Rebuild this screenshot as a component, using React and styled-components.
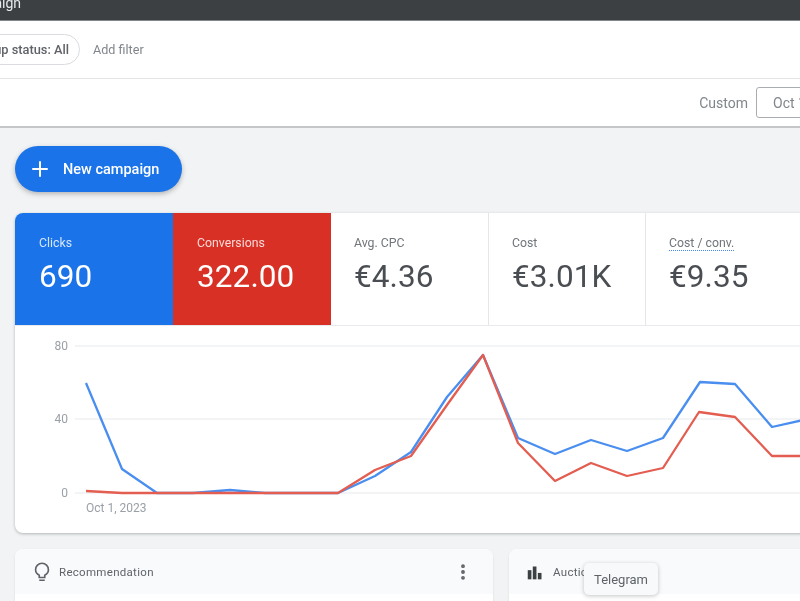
import React from 'react';
import styled, { createGlobalStyle } from 'styled-components';
import { Plus, MoreVertical } from 'lucide-react';

const GlobalStyle = createGlobalStyle`
  html, body {
    margin: 0;
    padding: 0;
    height: 100%;
    overflow: hidden;
    background: #f1f3f4;
  }
`;

const Page = styled.div`
  width: 800px;
  height: 601px;
  overflow: hidden;
  position: relative;
  background: #f1f3f4;
  font-family: Roboto, "Liberation Sans", sans-serif;
  color: #3c4043;
  filter: blur(0.55px);
`;

const TopBar = styled.header`
  height: 20px;
  background: #3c4043;
  border-bottom: 1px solid #80868b;
  overflow: hidden;
`;

const TitleSlot = styled.div`
  width: 21px;
  display: flex;
  justify-content: flex-end;
  white-space: nowrap;
`;

const Title = styled.span`
  font-size: 14px;
  line-height: 14px;
  margin-top: -4px;
  color: #e8eaed;
`;

const FilterBar = styled.div`
  height: 57px;
  display: flex;
  align-items: center;
  gap: 13px;
  background: #fff;
  border-bottom: 1px solid #e4e6e8;
`;

const PillSlot = styled.div`
  width: 80px;
  display: flex;
  justify-content: flex-end;
  white-space: nowrap;
`;

const Pill = styled.div`
  height: 29px;
  display: flex;
  align-items: center;
  padding: 0 10px 0 14px;
  border: 1px solid #dadce0;
  border-radius: 16px;
  font-size: 12.8px;
  font-weight: 500;
  color: #5f6368;
`;

const AddFilter = styled.span`
  font-size: 12.6px;
  color: #80868b;
`;

const DateBar = styled.div`
  height: 47px;
  display: flex;
  align-items: center;
  justify-content: flex-end;
  gap: 8px;
  background: #fff;
  border-bottom: 2px solid #c4c6c8;
  white-space: nowrap;
`;

const DateLabel = styled.span`
  font-size: 14px;
  color: #80868b;
`;

const DateBox = styled.div`
  width: 80px;
  height: 31px;
  margin-right: -36px;
  display: flex;
  align-items: center;
  padding-left: 16px;
  box-sizing: border-box;
  border: 1px solid #a9adb1;
  border-radius: 3px;
  font-size: 14px;
  color: #80868b;
  overflow: hidden;
`;

const Content = styled.main`
  padding: 18px 0 0 15px;
`;

const NewCampaign = styled.button`
  width: 167px;
  height: 46px;
  display: flex;
  align-items: center;
  gap: 11px;
  padding: 0 0 0 13px;
  border: none;
  border-radius: 23px;
  background: #1a73e8;
  color: #fff;
  font-family: Roboto, "Liberation Sans", sans-serif;
  font-size: 14.5px;
  font-weight: 500;
  box-shadow: 0 2px 5px rgba(60, 64, 67, 0.35);
`;

const Card = styled.section`
  width: 900px;
  margin-top: 21px;
  background: #fff;
  border-radius: 8px 0 0 8px;
  box-shadow: 0 1px 3px rgba(60, 64, 67, 0.35);
  overflow: hidden;
`;

const Tiles = styled.div`
  display: flex;
  height: 112px;
  border-bottom: 1px solid #e8eaed;
`;

const Tile = styled.div`
  width: ${(p) => p.$width}px;
  flex: none;
  box-sizing: border-box;
  padding: 23px 0 0 ${(p) => (p.$color ? 24 : 23)}px;
  background: ${(p) => p.$color || '#fff'};
  color: ${(p) => (p.$color ? '#fff' : '#3c4043')};
  border-right: ${(p) => (p.$color ? 'none' : '1px solid #e4e6e8')};
`;

const TileLabel = styled.div`
  width: fit-content;
  font-size: 12.3px;
  line-height: 14px;
  opacity: ${(p) => (p.$light ? 0.82 : 1)};
  color: ${(p) => (p.$light ? '#fff' : '#70757a')};
  border-bottom: ${(p) => (p.$dotted ? '1px dotted #4285f4' : 'none')};
`;

const TileValue = styled.div`
  margin-top: ${(p) => (p.$dotted ? 7 : 8)}px;
  font-size: 31.5px;
  line-height: 38px;
  letter-spacing: 0.1px;
  color: ${(p) => (p.$light ? '#fff' : '#4a4e52')};
`;

const ChartSvg = styled.svg`
  display: block;
  width: 785px;
  height: 207px;
`;

const AxisText = styled.text`
  font-size: 12px;
  fill: #9aa0a6;
`;

const Lower = styled.div`
  display: flex;
  gap: 16px;
  margin-top: 16px;
`;

const Panel = styled.section`
  width: ${(p) => p.$width}px;
  flex: none;
  height: 80px;
  background: #fff;
  border-radius: 8px 8px 0 0;
  box-shadow: 0 1px 2px rgba(60, 64, 67, 0.15);
  overflow: hidden;
`;

const PanelHead = styled.div`
  height: 45px;
  display: flex;
  align-items: center;
  padding: 0 20px 0 15.5px;
  gap: 6.5px;
  background: #f9fafb;
  color: #5f6368;
  font-size: 11.5px;
  letter-spacing: 0.3px;
  white-space: nowrap;
`;

const PanelTitle = styled.span`
  flex: 1;
`;

const Tooltip = styled.div`
  position: absolute;
  left: 584px;
  top: 563px;
  width: 74px;
  height: 32px;
  display: flex;
  align-items: center;
  justify-content: center;
  background: #f8f9fa;
  border-radius: 5px;
  box-shadow: 0 1px 4px rgba(60, 64, 67, 0.3);
  font-size: 13px;
  color: #5f6368;
`;

const tiles = [
  { label: 'Clicks', value: '690', color: '#1a73e8', width: 158 },
  { label: 'Conversions', value: '322.00', color: '#d93025', width: 158 },
  { label: 'Avg. CPC', value: '€4.36', width: 158 },
  { label: 'Cost', value: '€3.01K', width: 157 },
  { label: 'Cost / conv.', value: '€9.35', width: 200, dotted: true },
];

const bluePoints =
  '86,383 122,469 157,493 193,493 230,490 265,493 301,493 338,493 375,476 411,452 447,397 483,355 518,438 555,454 591,440 627,451 663,438 700,382 735,384 772,427 808,419';
const redPoints =
  '86,491 122,493 157,493 193,493 230,493 265,493 301,493 338,493 375,470 411,456 447,405 483,355 518,443 555,481 591,463 627,476 663,468 699,412 735,417 772,456 808,456';

const BulbIcon = () => (
  <svg width="22" height="22" viewBox="0 0 24 24" fill="none" stroke="#5f6368" strokeWidth="1.8">
    <path d="M9 21h6M9 18h6v-2.5c2.2-1.2 4-3.5 4-6a7 7 0 0 0-14 0c0 2.5 1.8 4.8 4 6z" />
  </svg>
);

const AuctionIcon = () => (
  <svg width="22" height="22" viewBox="0 0 24 24" fill="#3c4043">
    <rect x="3" y="10" width="4" height="10" />
    <rect x="8.5" y="6" width="4" height="14" />
    <rect x="14" y="13" width="4" height="7" />
  </svg>
);

const App = () => (
  <Page>
    <GlobalStyle />
    <TopBar>
      <TitleSlot>
        <Title>Campaign</Title>
      </TitleSlot>
    </TopBar>
    <FilterBar>
      <PillSlot>
        <Pill>Ad group status: All</Pill>
      </PillSlot>
      <AddFilter>Add filter</AddFilter>
    </FilterBar>
    <DateBar>
      <DateLabel>Custom</DateLabel>
      <DateBox>Oct 1, 2023</DateBox>
    </DateBar>
    <Content>
      <NewCampaign>
        <Plus size={24} strokeWidth={2} />
        New campaign
      </NewCampaign>
      <Card>
        <Tiles>
          {tiles.map((t) => (
            <Tile key={t.label} $color={t.color} $width={t.width}>
              <TileLabel $light={!!t.color} $dotted={t.dotted}>{t.label}</TileLabel>
              <TileValue $light={!!t.color} $dotted={t.dotted}>{t.value}</TileValue>
            </Tile>
          ))}
        </Tiles>
        <ChartSvg viewBox="15 326 785 207">
          {[346, 419, 493].map((y) => (
            <line key={y} x1="75" x2="800" y1={y} y2={y} stroke="#e8eaed" strokeWidth="1.2" />
          ))}
          <AxisText x="68" y="350" textAnchor="end">80</AxisText>
          <AxisText x="68" y="423" textAnchor="end">40</AxisText>
          <AxisText x="68" y="497" textAnchor="end">0</AxisText>
          <AxisText x="86" y="512">Oct 1, 2023</AxisText>
          <polyline points={bluePoints} fill="none" stroke="#4a8ef0" strokeWidth="2.3" strokeLinejoin="round" />
          <polyline points={redPoints} fill="none" stroke="#e35d50" strokeWidth="2.3" strokeLinejoin="round" />
        </ChartSvg>
      </Card>
      <Lower>
        <Panel $width={478}>
          <PanelHead>
            <BulbIcon />
            <PanelTitle>Recommendation</PanelTitle>
            <MoreVertical size={20} strokeWidth={2.6} color="#5f6368" />
          </PanelHead>
        </Panel>
        <Panel $width={320}>
          <PanelHead>
            <AuctionIcon />
            <PanelTitle>Auction insights</PanelTitle>
          </PanelHead>
        </Panel>
      </Lower>
    </Content>
    <Tooltip>Telegram</Tooltip>
  </Page>
);

export default App;
